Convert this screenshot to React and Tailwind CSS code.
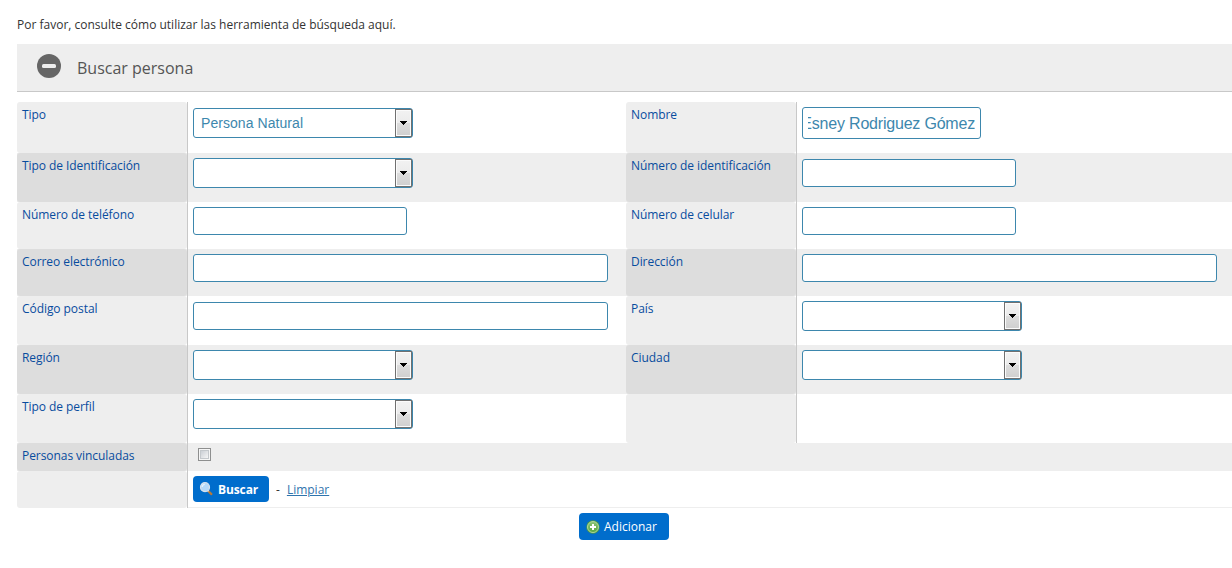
import React from "react";

const rows = [
  { h: "h-[51px]", left: { label: "Tipo", kind: "select", value: "Persona Natural", pad: "pt-[6px]" }, right: { label: "Nombre", kind: "name", value: "Esney Rodriguez Gómez", pad: "pt-[5px]" } },
  { h: "h-[49px]", left: { label: "Tipo de Identificación", kind: "select", pad: "pt-[5px]" }, right: { label: "Número de identificación", kind: "short", pad: "pt-[6px]" } },
  { h: "h-[47px]", left: { label: "Número de teléfono", kind: "short", pad: "pt-[5px]" }, right: { label: "Número de celular", kind: "short", pad: "pt-[5px]" } },
  { h: "h-[47px]", left: { label: "Correo electrónico", kind: "long", pad: "pt-[5px]" }, right: { label: "Dirección", kind: "long", pad: "pt-[5px]" } },
  { h: "h-[49px]", left: { label: "Código postal", kind: "long", pad: "pt-[6px]" }, right: { label: "País", kind: "select", pad: "pt-[5px]" } },
  { h: "h-[49px]", left: { label: "Región", kind: "select", pad: "pt-[5px]" }, right: { label: "Ciudad", kind: "select", pad: "pt-[5px]" } },
  { h: "h-[49px]", left: { label: "Tipo de perfil", kind: "select", pad: "pt-[5px]" }, right: { label: "", kind: "none", pad: "" } },
];

function Label({ text, dark }) {
  return (
    <div className="w-[171px] shrink-0 border-r border-[#c8c8c8]">
      <div className={`h-full rounded-[3px] pl-[5px] pt-[4px] text-[12px] leading-[18px] tracking-[-0.06px] text-[#084c9e] ${dark ? "bg-[#dddddd]" : "bg-[#eeeeee]"}`}>
        {text}
      </div>
    </div>
  );
}

function Select({ value }) {
  return (
    <div className="flex h-[30px] w-[220px] rounded-[3px] border border-[#3d87ad] bg-white">
      <div className="flex-1 pl-[7px] font-['Liberation_Sans',sans-serif] text-[14px] leading-[28px] tracking-[0.06px] text-[#3d87ad]">{value}</div>
      <div className="flex w-[17px] items-center justify-center border border-[#707070] bg-[linear-gradient(#f2f2f2_0%,#ebebeb_50%,#dddddd_50%,#cfcfcf_100%)] shadow-[inset_0_0_0_1px_#fbfbfb]">
        <svg width="7" height="4" viewBox="0 0 7 4" shapeRendering="crispEdges" aria-hidden="true">
          <path d="M0 0h7v1H0zM1 1h5v1H1zM2 2h3v1H2zM3 3h1v1H3z" fill="#000" />
        </svg>
      </div>
    </div>
  );
}

function Control({ kind, value }) {
  const box = "rounded-[3px] border border-[#3d87ad] bg-white";
  if (kind === "select") return <Select value={value} />;
  if (kind === "short") return <div className={`h-[28px] w-[214px] ${box}`} />;
  if (kind === "long") return <div className={`h-[28px] w-[415px] ${box}`} />;
  if (kind === "name")
    return (
      <div className={`h-[32px] w-[179px] px-[5px] ${box}`}>
        <div className="flex h-full justify-end overflow-hidden whitespace-nowrap font-['Liberation_Sans',sans-serif] text-[16px] leading-[31px] tracking-[-0.2px] text-[#3d87ad]">
          <span>{value}</span>
        </div>
      </div>
    );
  return null;
}

function Field({ field, dark, width }) {
  return (
    <div className={`flex ${width}`}>
      <Label text={field.label} dark={dark} />
      <div className={`pl-[5px] ${field.pad}`}>
        <Control kind={field.kind} value={field.value} />
      </div>
    </div>
  );
}

function SearchIcon() {
  return (
    <svg width="14" height="14" viewBox="0 0 14 14" aria-hidden="true">
      <path d="M9.2 9L12.4 12.1" stroke="#b87938" strokeWidth="2.2" strokeLinecap="round" />
      <path d="M8.4 8.2L9.6 9.4" stroke="#d8d8d8" strokeWidth="1.6" />
      <circle cx="6" cy="5.2" r="4.5" fill="#b4d9fa" stroke="#d9e2ec" strokeWidth="1.2" />
      <path d="M3.2 5a2.8 2.8 0 0 1 2.6-2.6" stroke="#e4f3ff" strokeWidth="1.2" fill="none" />
    </svg>
  );
}

function AddIcon() {
  return (
    <svg width="14" height="14" viewBox="0 0 14 14" aria-hidden="true">
      <defs>
        <linearGradient id="green" x1="0" y1="0" x2="0" y2="1">
          <stop offset="0" stopColor="#8dc47a" />
          <stop offset="1" stopColor="#57a83e" />
        </linearGradient>
      </defs>
      <circle cx="7" cy="7" r="6.7" fill="#4c9a45" />
      <circle cx="7" cy="7" r="5.5" fill="url(#green)" stroke="#b9dda8" strokeWidth="0.9" />
      <path d="M7 4v6M4 7h6" stroke="#fff" strokeWidth="2" />
    </svg>
  );
}

export default function App() {
  return (
    <div className="h-[568px] w-full overflow-hidden bg-white pl-[17px] font-['Open_Sans',sans-serif] text-[12px] text-[#333333]">
      <p className="pt-[16px] leading-[18px]">Por favor, consulte cómo utilizar las herramienta de búsqueda aquí.</p>
      <header className="mt-[10px] flex h-[48px] border-b border-[#c8c8c8] bg-[#eeeeee] pl-[20px]">
        <svg className="mt-[10px]" width="24" height="24" viewBox="0 0 24 24" aria-hidden="true">
          <circle cx="12" cy="12" r="12" fill="#666" />
          <rect x="5" y="10" width="14" height="4" rx="1.5" fill="#eee" />
        </svg>
        <h1 className="ml-[16px] mt-[12px] text-[16px] leading-[24px] text-[#555555]">Buscar persona</h1>
      </header>
      <main className="mt-[10px]">
        {rows.map((row, i) => (
          <div key={row.left.label} className={`flex ${row.h} ${i % 2 ? "bg-[#eeeeee]" : "bg-white"}`}>
            <Field field={row.left} dark={i % 2 === 1} width="w-[609px]" />
            <Field field={row.right} dark={i % 2 === 1} width="flex-1" />
          </div>
        ))}
        <div className="flex h-[28px] bg-[#eeeeee]">
          <Label text="Personas vinculadas" dark />
          <div className="pl-[10px] pt-[5px]">
            <div className="h-[13px] w-[13px] border border-[#8e8f8f] bg-[#f6f6f6] p-[1px]">
              <div className="h-full w-full border border-[#c4c8cc] bg-linear-to-br from-[#cbcfd5] to-[#f6f6f6]" />
            </div>
          </div>
        </div>
        <div className="flex h-[37px]">
          <Label text="" />
          <div className="flex flex-1 items-start border-b border-[#eeeeee] pl-[5px] pt-[5px]">
            <button className="flex h-[26px] w-[76px] items-center rounded-[4px] bg-[#006dcc] pl-[6px] text-[12px] font-bold text-white">
              <SearchIcon />
              <span className="ml-[5px] pt-[2px] tracking-[-0.1px]">Buscar</span>
            </button>
            <span className="ml-[7px] mt-[5px] leading-[18px]">-</span>
            <a className="ml-[7px] mt-[5px] leading-[18px] text-[#2f74ad] underline">Limpiar</a>
          </div>
        </div>
      </main>
      <footer className="pl-[562px] pt-[5px]">
        <button className="flex h-[27px] w-[90px] items-center rounded-[4px] bg-[#006dcc] pl-[7px] text-[12px] text-white">
          <AddIcon />
          <span className="ml-[4px]">Adicionar</span>
        </button>
      </footer>
    </div>
  );
}
